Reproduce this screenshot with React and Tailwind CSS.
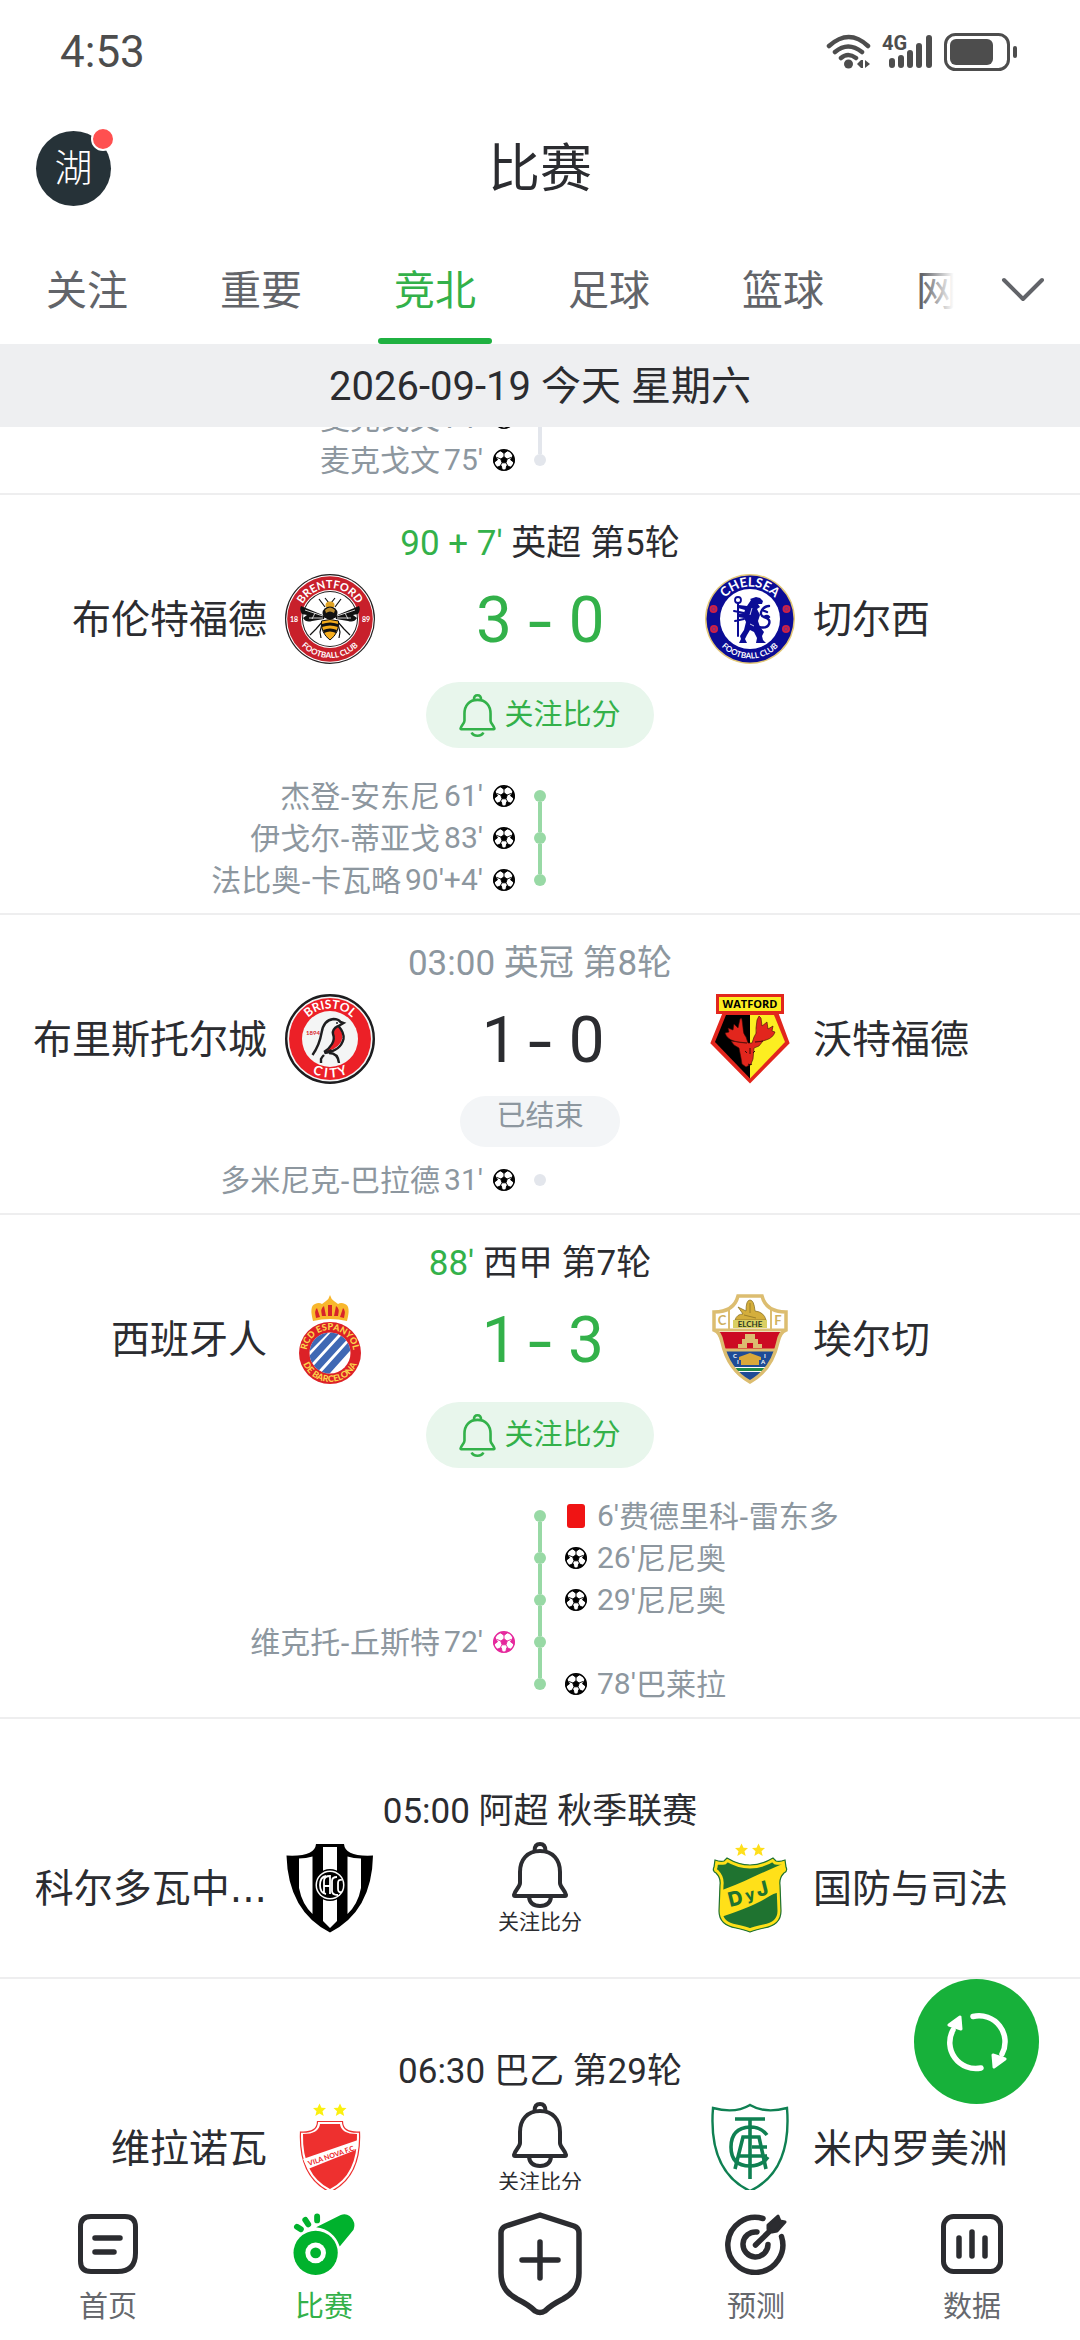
import { useState } from "react";

const TABS = ["关注", "重要", "竞北", "足球", "篮球", "网球"];

const MATCHES = [
  {
    id: "brentford-chelsea",
    state: "live",
    clock: "90 + 7'",
    league: "英超 第5轮",
    home: { name: "布伦特福德", crest: Brentford, score: 3 },
    away: { name: "切尔西", crest: Chelsea, score: 0 },
    events: [
      { side: "home", type: "goal", time: "61'", player: "杰登-安东尼" },
      { side: "home", type: "goal", time: "83'", player: "伊戈尔-蒂亚戈" },
      { side: "home", type: "goal", time: "90'+4'", player: "法比奥-卡瓦略" },
    ],
  },
  {
    id: "bristol-watford",
    state: "finished",
    clock: "03:00",
    league: "英冠 第8轮",
    home: { name: "布里斯托尔城", crest: BristolCity, score: 1 },
    away: { name: "沃特福德", crest: Watford, score: 0 },
    events: [{ side: "home", type: "goal", time: "31'", player: "多米尼克-巴拉德" }],
  },
  {
    id: "espanyol-elche",
    state: "live",
    clock: "88'",
    league: "西甲 第7轮",
    home: { name: "西班牙人", crest: Espanyol, score: 1 },
    away: { name: "埃尔切", crest: Elche, score: 3 },
    events: [
      { side: "away", type: "red", time: "6'", player: "费德里科-雷东多" },
      { side: "away", type: "goal", time: "26'", player: "尼尼奥" },
      { side: "away", type: "goal", time: "29'", player: "尼尼奥" },
      { side: "home", type: "penalty", time: "72'", player: "维克托-丘斯特" },
      { side: "away", type: "goal", time: "78'", player: "巴莱拉" },
    ],
  },
  {
    id: "cordoba-defensa",
    state: "upcoming",
    clock: "05:00",
    league: "阿超 秋季联赛",
    home: { name: "科尔多瓦中央队", crest: CentralCordoba },
    away: { name: "国防与司法", crest: Defensa },
    events: [],
  },
  {
    id: "vilanova-america",
    state: "upcoming",
    clock: "06:30",
    league: "巴乙 第29轮",
    home: { name: "维拉诺瓦", crest: VilaNova },
    away: { name: "米内罗美洲", crest: AmericaMineiro },
    events: [],
  },
];

const EARLIER_EVENTS = [
  { side: "home", type: "goal", time: "71'", player: "麦克戈文" },
  { side: "home", type: "goal", time: "75'", player: "麦克戈文" },
];

/* ---------- crests ---------- */

function Brentford() {
  return (
    <svg viewBox="0 0 90 90" className="size-[90px]">
      <defs>
        <path id="bre-top" d="M14 45a31 31 0 0 1 62 0" />
        <path id="bre-bottom" d="M6 45a39 39 0 0 0 78 0" />
      </defs>
      <circle cx="45" cy="45" r="45" fill="#231f20" />
      <circle cx="45" cy="45" r="43.8" fill="#fff" />
      <circle cx="45" cy="45" r="42.8" fill="#c8202b" />
      <circle cx="45" cy="45" r="29" fill="#fff" />
      <circle cx="45" cy="45" r="28" fill="#231f20" />
      <circle cx="45" cy="45" r="27" fill="#fff" />
      <g fill="#fff" fontFamily="Lato, sans-serif" fontWeight="700" textAnchor="middle">
        <text fontSize="11">
          <textPath href="#bre-top" startOffset="50%">BRENTFORD</textPath>
        </text>
        <text fontSize="8">
          <textPath href="#bre-bottom" startOffset="50%">FOOTBALL CLUB</textPath>
        </text>
        <text x="9" y="48" fontSize="7">18</text>
        <text x="81" y="48" fontSize="7">89</text>
      </g>
      <g fill="#111">
        <path d="M40 42 16 32q-2 3 1 8l5 1-4 3q3 5 9 3l12-2z" />
        <path d="M50 42 74 32q2 3-1 8l-5 1 4 3q-3 5-9 3l-12-2z" />
      </g>
      <g stroke="#fff" strokeWidth=".8" fill="none">
        <path d="M38 42 20 36M38 44l-14 0M52 42l18-6M52 44h14M30 39l-3 6M60 39l3 6" />
      </g>
      <g stroke="#111" strokeWidth="1.2" fill="none">
        <path d="M44 29l-4-5M46 29l4-5M40 33l-6-8M50 33l6-8M38 47l-7 8-6 6M52 47l7 8 6 6M37 50l-2 8 1 6M53 50l2 8-1 6" />
      </g>
      <ellipse cx="45" cy="31" rx="4.5" ry="3.5" fill="#e0a323" />
      <ellipse cx="45" cy="39" rx="7.5" ry="6.5" fill="#111" />
      <path d="M40 36q5-5 10 0l-1 3q-4-3-8 0z" fill="#b98a2f" />
      <path d="M36.5 47q8.5-3 17 0 1 12-8.5 19-9.5-7-8.5-19z" fill="#f5ad1d" stroke="#111" strokeWidth="1" />
      <path d="M37 50q8-3 16 0v3q-8-3-16 0zM38 56q7-3 14 0l-1 3q-6-3-12 0z" fill="#111" />
    </svg>
  );
}

function Chelsea() {
  return (
    <svg viewBox="0 0 90 90" className="size-[90px]">
      <defs>
        <path id="che-top" d="M12.500 45a32.500 32.500 0 0 1 65 0" />
        <path id="che-bottom" d="M5.500 45a39.500 39.500 0 0 0 79 0" />
      </defs>
      <circle cx="45" cy="45" r="45" fill="#e3c878" />
      <circle cx="45" cy="45" r="43.5" fill="#0b0c95" />
      <circle cx="45" cy="45" r="30" fill="#fff" />
      <g fill="#fff" fontFamily="Lato, sans-serif" fontWeight="700" textAnchor="middle">
        <text fontSize="13">
          <textPath href="#che-top" startOffset="50%">CHELSEA</textPath>
        </text>
        <text fontSize="8">
          <textPath href="#che-bottom" startOffset="50%">FOOTBALL CLUB</textPath>
        </text>
      </g>
      {[[8.5, 35], [81.5, 35], [9, 55], [81, 55]].map(([x, y]) => (
        <g key={`${x}-${y}`}>
          <circle cx={x} cy={y} r="4" fill="#cf2144" />
          <circle cx={x} cy={y} r="1.8" fill="none" stroke="#6b2f8f" strokeWidth=".8" />
        </g>
      ))}
      <g fill="none" stroke="#0b0c95" strokeLinecap="round">
        <circle cx="33" cy="26" r="3" strokeWidth="1.8" />
        <path d="M33 29v33M29 37l10 2M30 47l9-2" strokeWidth="2" />
        <path d="M54 53q8 2 10-3t-5-7q-5-2-2-7 3-4 7-4M59 43q3-2 5 0M57 36l5 2" strokeWidth="2.4" />
      </g>
      <path
        d="M45 25l6-2 4 1 3 3-1 3h-4l2 3-3 2 3 6-2 6 2 6 4 5-2 4 1 4 3 3H51l1-5-3-6-4-2-3 5-2 4 2 4H34l2-4-1-3 4-6 2-8-2-4-6-1-1-3 7-1 1-3-7-2 1-3 8 1 4-6z"
        fill="#0b0c95"
      />
      <path d="M47 34l-2 7M45 50l4 2" stroke="#fff" strokeWidth=".8" />
    </svg>
  );
}

function BristolCity() {
  return (
    <svg viewBox="0 0 90 90" className="size-[90px]">
      <defs>
        <path id="bri-top" d="M14.500 45a30.500 30.500 0 0 1 61 0" />
        <path id="bri-bottom" d="M6.500 45a38.500 38.500 0 0 0 77 0" />
      </defs>
      <circle cx="45" cy="45" r="43.8" fill="#f4f5f5" stroke="#1d1d1f" strokeWidth="2.4" />
      <circle cx="45" cy="45" r="41" fill="#ec2027" />
      <circle cx="45" cy="45" r="28" fill="#f4f5f5" />
      <g fill="#fff" fontFamily="Lato, sans-serif" fontWeight="700" textAnchor="middle">
        <text fontSize="12">
          <textPath href="#bri-top" startOffset="50%">BRISTOL</textPath>
        </text>
        <text fontSize="13">
          <textPath href="#bri-bottom" startOffset="50%">C I T Y</textPath>
        </text>
      </g>
      <text x="21" y="41" fontSize="6" fontWeight="700" fontFamily="Lato, sans-serif" fill="#d8222a">
        1894
      </text>
      <path d="M53 32q-6 4-5 8 3 5-1 10-3 5-8 8 12-2 17-10 4-8-3-16z" fill="#ec2027" />
      <g fill="none" stroke="#1d1d1f" strokeWidth="2.4">
        <path d="M27.500 61q7-10 9-22 2-13 12-14 5 0 7 3l3 1-5 3q6 7 5 13-3 12-19 14l7-3" />
        <path d="M53 32q-6 3-5 8 2 5-1 10-3 5-8 8M36 69v-4q1-2 3-4M44 59q9 0 10 10" />
      </g>
      <circle cx="52" cy="29" r="1" fill="#1d1d1f" />
    </svg>
  );
}

function Watford() {
  return (
    <svg viewBox="0 0 90 90" className="size-[90px]">
      <path d="M19 18h53l11.500 31L45 88 6.500 49z" fill="#e2261d" stroke="#e2261d" strokeWidth="2" />
      <path d="M21 21h24v63.500L10 48z" fill="#000" />
      <path d="M45 21h24l11 27-35 36.500z" fill="#fcee21" />
      <rect x="12.5" y="1.5" width="65" height="17" fill="#fcee21" stroke="#e2261d" strokeWidth="3" />
      <text x="45" y="14" textAnchor="middle" fontFamily="Open Sans, sans-serif" fontWeight="700" fontSize="11" fill="#000">
        WATFORD
      </text>
      <path
        d="M42 49q-8 0-13-2-7-2-9-8l4-1-1-4 5 2 1-6 4 4 2-9q2-2 2 1l1 8q0 6 3 9l2 6h4l2-6q3-3 2-9l1-8 2-4 2 2 1 8 5-4 1 7 5-3-1 5 3 1q-2 6-9 8-5 2-11 2l8-1-4 5-5 2-1 11-2 5-5 3-4-3-1-6-2-10-5-3-3-4z"
        fill="#e2261d"
        stroke="#3b0b08"
        strokeWidth=".6"
      />
      <path d="M40 57l2 2M50 57l-2 2M43 70l2 1 2-1M45 54v6" stroke="#3b0b08" strokeWidth="1" />
    </svg>
  );
}

function Espanyol() {
  return (
    <svg viewBox="0 0 90 90" className="size-[90px]">
      <defs>
        <path id="esp-top" d="M25.800 73a23.500 23.500 0 1 1 38.400 0" />
        <path id="esp-bottom" d="M16 59a29 29 0 0 0 58 0" />
        <clipPath id="esp-clip">
          <circle cx="45" cy="59" r="20.5" />
        </clipPath>
      </defs>
      <path d="M28 27Q24 12 30 10q4-2 7 0l4-3q3-2 4-6 1 4 4 6l4 3q3-2 7 0 6 2 2 17-17-4-34 0z" fill="#f8b72d" />
      <path d="M31 24q-2-8 1-10l3 9zM37 22q-2-8 2-10l2 10zM43 22V11h4v11zM59 24q2-8-1-10l-3 9zM53 22q2-8-2-10l-2 10z" fill="#d8232a" />
      <circle cx="45" cy="59" r="31" fill="#dc2127" />
      <circle cx="45" cy="59" r="20.5" fill="#fff" />
      <g clipPath="url(#esp-clip)" stroke="#3f68b4" strokeWidth="7">
        <path d="M17 60 49 28M18 74l42-46M24 82l42-46M35 85l36-40" />
      </g>
      <g fill="#fbd44b" fontFamily="Lato, sans-serif" fontWeight="900" textAnchor="middle" fontSize="9">
        <text>
          <textPath href="#esp-top" startOffset="50%">RCD ESPANYOL</textPath>
        </text>
        <text>
          <textPath href="#esp-bottom" startOffset="50%">DE BARCELONA</textPath>
        </text>
      </g>
    </svg>
  );
}

function Elche() {
  const outline = "M33 2h24q4 16 24 16v18q-6 2-8 12-6 28-28 40-22-12-28-40-2-10-8-12V18q20 0 24-16z";
  return (
    <svg viewBox="0 0 90 90" className="size-[90px]">
      <defs>
        <clipPath id="elc-clip">
          <path d={outline} />
        </clipPath>
      </defs>
      <g clipPath="url(#elc-clip)">
        <rect width="90" height="90" fill="#fff" />
        <rect y="38" width="90" height="18" fill="#cc0a23" />
        <rect y="57" width="90" height="33" fill="#1f4c96" />
        <rect y="73" width="90" height="5" fill="#fff" />
        <rect y="74" width="90" height="3" fill="#1d8a45" />
        <path d="M8 36h74M14 56h62" stroke="#dcbd70" strokeWidth="3" />
        <path d="M24 12v24M66 12v24" stroke="#dcbd70" strokeWidth="2" />
      </g>
      <path d={outline} fill="none" stroke="#dcbd70" strokeWidth="3.5" />
      <path d="M30 26q2-6 8-6l-5-7 8 4q0-11 4-11t5 11q9 1 11 9z" fill="#d4ae3c" stroke="#8d7326" strokeWidth=".8" />
      <path d="M45 9v10M39 21l12 3" stroke="#8d7326" strokeWidth=".8" />
      <rect x="28" y="26" width="34" height="8" fill="#d9cf62" />
      <g textAnchor="middle" fontFamily="Lato, sans-serif" fontWeight="700">
        <text x="45" y="33" fontSize="8" fill="#2d3a22">ELCHE</text>
        <text x="17" y="31" fontSize="13" fill="#cfb05c">C</text>
        <text x="73" y="31" fontSize="13" fill="#cfb05c">F</text>
        <text x="30" y="64" fontSize="6" fill="#fff">C</text>
        <text x="60" y="64" fontSize="6" fill="#fff">I</text>
        <text x="33" y="70" fontSize="6" fill="#fff">I</text>
        <text x="58" y="70" fontSize="6" fill="#fff">A</text>
      </g>
      <path d="M33 54v-4h4v-5h3v-5h10v5h3v5h4v4h-9v-5h-6v5z" fill="#dcbd70" />
      <path d="M34 63l11-4 11 4v3H34zM36 66h18v5H36z" fill="#d9a83a" />
    </svg>
  );
}

function CentralCordoba() {
  const outline = "M1.500 12.500Q30 14 31 1h28q1 13 29 11.500Q87 68 45 89.500 3 68 1.500 12.500z";
  return (
    <svg viewBox="0 0 90 90" className="size-[90px]">
      <path d={outline} fill="#000" />
      <path d="M14 15.500q7 0 13.500-2V71Q17 61 14 45zM38 4h14v74l-7 7-7-7zM62.500 13.500q6 2 13.500 2V45q-3 16-13.500 26z" fill="#fff" />
      <circle cx="45" cy="42" r="16" fill="#000" />
      <circle cx="45" cy="42" r="14.5" fill="#fff" />
      <circle cx="45" cy="42" r="13" fill="#000" />
      <g fill="none" stroke="#fff" strokeWidth="1.8">
        <path d="M41 33q-6 1-6 9t6 9M39 51V38q0-5 6-5v18M39 43h6M52 34q-5 0-5 4v10q0 4 6 4M57 37q-4-1-4 3v6q0 4 4 3" />
      </g>
    </svg>
  );
}

function Star({ x, y, fill }) {
  return (
    <path
      transform={`translate(${x} ${y})`}
      d="M0-6.500 2-2.200 6.500-2 3 1.300 4.200 6 0 3.500-4.200 6-3 1.300-6.500-2-2-2.200z"
      fill={fill}
    />
  );
}

function Defensa() {
  const outline = "M22 15q23 14 46 0l3 3q4 1 9-1l1 7q2 4-2 6-5 5-4 12l1 26q0 14-17 17-9 2-14 4-5-2-14-4-17-3-17-17l1-26q1-7-4-12-4-2-2-6l1-7q5 2 9 1z";
  return (
    <svg viewBox="0 0 90 90" className="size-[90px]">
      <defs>
        <clipPath id="def-clip">
          <path d={outline} />
        </clipPath>
      </defs>
      <Star x={36.5} y={7} fill="#ffdf1b" />
      <Star x={53.5} y={7} fill="#ffdf1b" />
      <g clipPath="url(#def-clip)">
        <rect width="90" height="90" fill="#1f7330" />
        <path d="M0 53q30-10 48-19 20-9 34-15v28Q70 49 58 57 40 67 0 79z" fill="#ffe019" />
        <path d={outline} fill="none" stroke="#ffe019" strokeWidth="7" />
      </g>
      <path d={outline} fill="none" stroke="#1f7330" strokeWidth="1.2" />
      <g fill="#1f7330" fontFamily="Inter, sans-serif" fontWeight="800">
        <text transform="translate(25 64) rotate(-14)" fontSize="20">D</text>
        <text transform="translate(42 58) rotate(-16)" fontSize="15">y</text>
        <text transform="translate(53 54) rotate(-14)" fontSize="20">J</text>
      </g>
    </svg>
  );
}

function VilaNova() {
  const outline = "M15.500 29q17 1 17-10.500h25q0 11.500 17 10.500 2 45-29.500 60-31.500-15-29.500-60z";
  return (
    <svg viewBox="0 0 90 90" className="size-[90px]">
      <Star x={34.5} y={7} fill="#fbf00f" />
      <Star x={55} y={7} fill="#fbf00f" />
      <path d={outline} fill="#fff" stroke="#ee302f" strokeWidth="1.2" />
      <path d="M18 31q16 0 17-10h20q1 10 17 10 1 41-27 55-28-14-27-55z" fill="#ee302f" />
      <path d="M18 56 73 37v9L23 66z" fill="#fff" />
      <text transform="translate(24 63) rotate(-19)" fontFamily="Lato, sans-serif" fontWeight="900" fontSize="7" fill="#ee302f">
        VILA NOVA F.C.
      </text>
    </svg>
  );
}

function AmericaMineiro() {
  return (
    <svg viewBox="0 0 90 90" className="size-[90px]">
      <path
        d="M8 5q22 6 37-3 15 9 37 3Q87 68 45 88 3 68 8 5z"
        fill="#fff"
        stroke="#0f8052"
        strokeWidth="2.4"
      />
      <g fill="none" stroke="#0f8052" strokeWidth="3.6">
        <path d="M30 16h30M45 16v60" />
        <path d="M62 32q-6-8-17-8-19 1-19 20t19 19q12 0 18-9" />
        <path d="M30 66l8-32h16l7 32M34 53h28M47 44h15" />
      </g>
    </svg>
  );
}

/* ---------- icons ---------- */

function BellIcon({ className, clapper = "M17 55q1 9 11 9t11-9" }) {
  return (
    <svg viewBox="0 0 56 66" className={className} fill="none" stroke="currentColor" strokeWidth="4" strokeLinejoin="round">
      <path d="M22.500 9q0-7 5.500-7t5.500 7" />
      <path d="M28 9C15 9 8 18 8 30v11c0 4-5 7-6 12q0 1 1 1h50q1 0 1-1c-1-5-6-8-6-12V30C48 18 41 9 28 9z" />
      <path d={clapper} />
    </svg>
  );
}

function BallIcon({ className }) {
  return (
    <svg viewBox="0 0 22 22" className={className}>
      <circle cx="11" cy="11" r="10.3" fill="#fff" stroke="currentColor" strokeWidth="1.4" />
      <g fill="currentColor" stroke="currentColor" strokeWidth=".9" strokeLinejoin="round">
        <path d="M11 7.800l3.200 2.300-1.200 3.700H9l-1.200-3.700z" />
        <path d="M7 1.400h8L11 4.300zM20 6.500l1.200 7-3.700-2.700zM18.200 18.300l-5.500 3 1-4.500zM3.800 18.300l5.500 3-1-4.500zM2 6.500l-1.200 7 3.700-2.700z" />
      </g>
      <path d="M11 8V4M14 10l4-1.500M13 13.800l2 3.400M9 13.800l-2 3.400M8 10 4 8.500" stroke="currentColor" strokeWidth=".9" />
    </svg>
  );
}

function StatusIcons() {
  return (
    <div className="flex items-center gap-2.5 text-[#4d4d4d]">
      <svg width="46" height="36" viewBox="0 0 46 36">
        <g fill="none" stroke="currentColor" strokeWidth="4.5" strokeLinecap="round">
          <path d="M3 12q20-18 39 0M9 18q13-11 27 0M15 24q7-6 15 0" />
        </g>
        <circle cx="22.5" cy="30" r="4.5" fill="currentColor" />
        <path d="M31 30l4-4v8zM44 30l-5-4v8zM35 26h2v8h-2z" fill="currentColor" />
      </svg>
      <svg width="52" height="36" viewBox="0 0 52 36" className="overflow-visible">
        <text x="0" y="16" fontFamily="Roboto, sans-serif" fontWeight="700" fontSize="20" fill="currentColor">
          4G
        </text>
        <g stroke="currentColor" strokeWidth="6" strokeLinecap="round">
          <path d="M10 27v4M19 24v7M28 19v12M37 12v19M47 4v27" />
        </g>
      </svg>
      <svg width="74" height="38" viewBox="0 0 74 38">
        <rect x="1.5" y="1.5" width="63" height="35" rx="10" fill="none" stroke="currentColor" strokeWidth="3" />
        <rect x="6" y="6" width="43" height="26" rx="6" fill="currentColor" />
        <rect x="69" y="13" width="4" height="12" rx="2" fill="currentColor" />
      </svg>
    </div>
  );
}

function HomeIcon() {
  return (
    <svg width="62" height="62" viewBox="0 0 62 62" fill="none" stroke="currentColor" strokeWidth="5" strokeLinecap="round">
      <path d="M14 3.500h34q10.500 0 10.500 10.500v26q0 18.500-18 18.500H14Q3.500 58.500 3.500 48V14Q3.500 3.500 14 3.500z" />
      <path d="M18 25h25M18 39h19" strokeWidth="5.5" />
    </svg>
  );
}

function WhistleIcon() {
  return (
    <svg width="62" height="62" viewBox="0 0 62 63">
      <circle cx="22.5" cy="40.5" r="22.5" fill="#00b22d" />
      <circle cx="22.5" cy="40.5" r="10.5" fill="#fff" />
      <circle cx="22.5" cy="40.5" r="5.5" fill="#00b22d" />
      <path d="M23 14.500 48 2q5-2 9 1 7 6 4 14L47 34Q41 17 23 14.500z" fill="#00b22d" />
      <path d="M3.500 14l4 2.500M12 7l3 4.500M24 3.500v4" stroke="#00b22d" strokeWidth="6" strokeLinecap="round" />
    </svg>
  );
}

function ShieldPlusIcon() {
  return (
    <svg width="84" height="104" viewBox="0 0 84 104" fill="none" stroke="currentColor" strokeWidth="5.5" strokeLinecap="round" strokeLinejoin="round">
      <path d="M42 3l34 11q5 2 5 7v40c0 16-9 22-16 26q-12 6-18 12-5 3-10 0-6-6-18-12C12 83 3 77 3 61V21q0-5 5-7z" />
      <path d="M24 48h36M42 30v36" />
    </svg>
  );
}

function TargetIcon() {
  return (
    <svg width="62" height="62" viewBox="0 0 62 62" fill="none" stroke="currentColor" strokeWidth="5.5" strokeLinecap="round">
      <path d="M38 5.500a27.500 27.500 0 1 0 18.500 18" />
      <path d="M32 19a12.500 12.500 0 1 0 11 12.500" />
      <path d="M30.500 32 50 13" />
      <path d="M43 16v-4L53 3l2 5 5 1-8 9-5 1z" fill="currentColor" strokeWidth="3" strokeLinejoin="round" />
    </svg>
  );
}

function DataIcon() {
  return (
    <svg width="62" height="62" viewBox="0 0 62 62" fill="none" stroke="currentColor" strokeWidth="5" strokeLinecap="round">
      <rect x="2.5" y="3.5" width="57" height="55" rx="10" />
      <path d="M18 25v18M31 19v24M44 25v18" strokeWidth="5.5" />
    </svg>
  );
}

/* ---------- match list ---------- */

function EventMark({ type }) {
  if (type === "red") {
    return (
      <span className="flex w-[22px] justify-center">
        <span className="h-6 w-[18px] rounded-[3px] bg-[#f01414]" />
      </span>
    );
  }
  return <BallIcon className={type === "penalty" ? "size-[22px] text-[#e5279c]" : "size-[22px] text-black"} />;
}

function Events({ items, live }) {
  const tone = live ? "bg-[#98d9a5]" : "bg-[#e3e6ec]";
  return (
    <ul className="text-[30px] leading-[42px] text-[#8d979f]">
      {items.map((event, index) => (
        <li key={index} className="grid h-[42px] grid-cols-[1fr_50px_1fr] items-center">
          <div className="flex items-center justify-end gap-2.5">
            {event.side === "home" && (
              <>
                <span className="flex gap-1">
                  <span className="font-['Noto_Sans','Noto_Sans_CJK_SC',sans-serif]">{event.player}</span>
                  <span>{event.time}</span>
                </span>
                <EventMark type={event.type} />
              </>
            )}
          </div>
          <div className="flex h-full flex-col items-center">
            <span className={`w-1 flex-1 ${index > 0 ? tone : ""}`} />
            <span className={`size-3 rounded-full ${tone}`} />
            <span className={`w-1 flex-1 ${index < items.length - 1 ? tone : ""}`} />
          </div>
          <div className="flex items-center gap-2.5">
            {event.side === "away" && (
              <>
                <EventMark type={event.type} />
                <span className="flex">
                  <span>{event.time}</span>
                  <span className="font-['Noto_Sans','Noto_Sans_CJK_SC',sans-serif]">{event.player}</span>
                </span>
              </>
            )}
          </div>
        </li>
      ))}
    </ul>
  );
}

function Score({ home, away, live }) {
  return (
    <div className={`grid grid-cols-[1fr_56px_1fr] items-center pt-1 text-[64px] leading-[86px] proportional-nums ${live ? "text-[#33b14a]" : "text-[#2b2c30]"}`}>
      <span className="text-right">{home}</span>
      <span className="text-center font-['Inter']">-</span>
      <span>{away}</span>
    </div>
  );
}

// long club names keep five characters and end in dots
function TeamName({ name }) {
  if (name.length <= 6) return name;
  return (
    <>
      {name.slice(0, 5)}
      <span className="font-['DejaVu_Sans']">...</span>
    </>
  );
}

function Match({ match }) {
  const { state, home, away } = match;
  const live = state === "live";
  const upcoming = state === "upcoming";
  const HomeCrest = home.crest;
  const AwayCrest = away.crest;

  return (
    <article className={`border-b-2 border-[#eeeeef] ${upcoming ? "pt-[72px] pb-[45px]" : "pt-7 pb-3"}`}>
      <p className={`text-center text-[35px] leading-[42px] ${state === "finished" ? "text-[#8d979f]" : "text-[#2b2c30]"}`}>
        <span className={live ? "text-[#33b14a]" : ""}>{match.clock}</span> {match.league}
      </p>
      <div className="mt-[9px] grid h-[90px] grid-cols-[1fr_90px_330px_90px_1fr] items-center text-[39px] leading-[54px] text-[#2b2c30]">
        <span className="pt-0.5 pr-[18px] text-right whitespace-nowrap">
          <TeamName name={home.name} />
        </span>
        <HomeCrest />
        {upcoming ? (
          <button type="button" className="flex flex-col items-center">
            <BellIcon className="h-[66px] w-14" />
            <span className="pt-0.5 text-[21px] leading-6">关注比分</span>
          </button>
        ) : (
          <Score home={home.score} away={away.score} live={live} />
        )}
        <AwayCrest />
        <span className="pt-0.5 pl-[18px] whitespace-nowrap">
          <TeamName name={away.name} />
        </span>
      </div>
      {live && (
        <button
          type="button"
          className="mx-auto mt-[18px] mb-[27px] flex h-[66px] w-[228px] items-center justify-center gap-2 rounded-full bg-[#e8f6ec] text-[29px] text-[#33b14a]"
        >
          <BellIcon className="h-[43px] w-[37px]" clapper="M19 59q2 5 9 5t9-5" />
          <span className="pt-0.5">关注比分</span>
        </button>
      )}
      {state === "finished" && (
        <p className="mx-auto my-3 h-[51px] w-40 rounded-full bg-[#f3f5f7] text-center text-[29px] leading-10 text-[#8d979f]">已结束</p>
      )}
      <Events items={match.events} live={live} />
    </article>
  );
}

function NavItem({ label, active, children }) {
  return (
    <a
      href="#"
      aria-current={active ? "page" : undefined}
      className="flex flex-1 flex-col items-center gap-3 pt-[23px] text-[#2b2c30]"
    >
      {children}
      <span className={`text-[29px] leading-10 ${active ? "text-[#33b14a]" : "text-[#66686d]"}`}>{label}</span>
    </a>
  );
}

export default function App() {
  const [tab, setTab] = useState("竞北");

  return (
    <div className="relative flex h-screen flex-col overflow-hidden bg-white font-['Roboto','Noto_Sans_CJK_SC',sans-serif] text-[#2b2c30]">
      <div className="flex h-[100px] shrink-0 items-center justify-between pt-1 pr-[62px] pl-[60px]">
        <span className="text-[44px] leading-none text-[#4d4d4d]">4:53</span>
        <StatusIcons />
      </div>

      <header className="grid h-[136px] shrink-0 grid-cols-[1fr_auto_1fr] items-center px-9">
        <button type="button" className="relative flex size-[75px] items-center justify-center rounded-full bg-[#263238] text-[38px] font-light text-white">
          湖
          <span className="absolute -top-1 -right-1 size-6 rounded-full border-2 border-white bg-[#ff5050]" />
        </button>
        <h1 className="pt-1 text-[52px]">比赛</h1>
      </header>

      <nav className="flex h-[108px] shrink-0">
        <div className="relative flex min-w-0 flex-1 overflow-hidden">
          {TABS.map((name) => (
            <button
              key={name}
              type="button"
              onClick={() => setTab(name)}
              className={`flex w-[174px] shrink-0 justify-center text-[41px] ${name === tab ? "text-[#33b14a]" : "text-[#626469]"}`}
            >
              <span className="flex h-full w-[114px] flex-col">
                <span className="flex flex-1 items-center justify-center pt-2.5">{name}</span>
                <span className={`h-1.5 rounded-sm ${name === tab ? "bg-[#1fb141]" : ""}`} />
              </span>
            </button>
          ))}
          <span className="absolute inset-y-0 right-0 w-8 bg-linear-to-l from-white to-transparent" />
        </div>
        <button type="button" aria-label="更多" className="flex w-[126px] items-center justify-center pl-3 text-[#626469]">
          <svg width="44" height="26" viewBox="0 0 44 26" fill="none" stroke="currentColor" strokeWidth="4" strokeLinecap="round" strokeLinejoin="round">
            <path d="M3 3l19 19L41 3" />
          </svg>
        </button>
      </nav>

      <h2 className="h-[83px] shrink-0 bg-[#eeeff1] text-center text-[40px] leading-[86px]">2026-09-19 今天 星期六</h2>

      <main className="min-h-0 flex-1 overflow-hidden">
        <section className="-mt-[30px] border-b-2 border-[#eeeeef] pb-3">
          <Events items={EARLIER_EVENTS} live={false} />
        </section>
        {MATCHES.map((match) => (
          <Match key={match.id} match={match} />
        ))}
      </main>

      <button
        type="button"
        aria-label="刷新"
        className="absolute right-[41px] bottom-[236px] flex size-[125px] items-center justify-center rounded-full bg-[#17b13a] text-white"
      >
        <svg width="64" height="64" viewBox="0 0 64 64" fill="none" stroke="currentColor" strokeWidth="5.5" strokeLinecap="round">
          <path d="M28 6.500A26 26 0 0 1 57 44M36 58A26 26 0 0 1 8 20" />
          <path d="M48 45l12 4-11 8zM16 19 4 15l11-8z" fill="currentColor" strokeWidth="3" strokeLinejoin="round" />
        </svg>
      </button>

      <nav className="flex h-[150px] shrink-0 bg-white">
        <NavItem label="首页">
          <HomeIcon />
        </NavItem>
        <NavItem label="比赛" active>
          <WhistleIcon />
        </NavItem>
        <a href="#" aria-label="发布" className="flex flex-1 justify-center pt-[22px] text-[#2b2c30]">
          <ShieldPlusIcon />
        </a>
        <NavItem label="预测">
          <TargetIcon />
        </NavItem>
        <NavItem label="数据">
          <DataIcon />
        </NavItem>
      </nav>
    </div>
  );
}
